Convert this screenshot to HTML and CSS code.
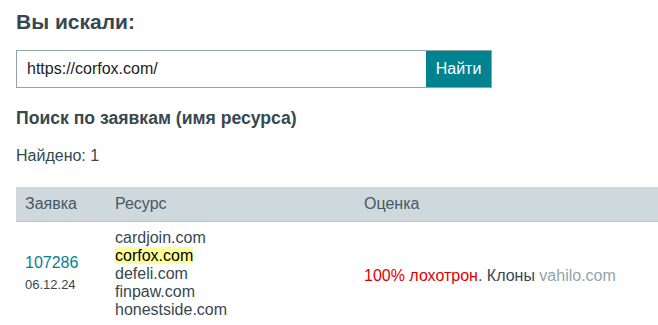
FILE: index.html
```html
<!DOCTYPE html>
<html lang="ru">
<head>
<meta charset="utf-8">
<link rel="stylesheet" href="styles.css">
</head>
<body>
<div class="page">
  <h1 class="title">Вы искали:</h1>
  <form class="search">
    <input class="search-input" type="text" value="https://corfox.com/">
    <button class="search-btn" type="button">Найти</button>
  </form>
  <h2 class="subtitle">Поиск по заявкам (имя ресурса)</h2>
  <p class="found">Найдено: 1</p>
  <table class="results">
    <thead>
      <tr><th class="c1">Заявка</th><th class="c2">Ресурс</th><th class="c3">Оценка</th></tr>
    </thead>
    <tbody>
      <tr>
        <td class="c1"><a class="req" href="#">107286</a><div class="date">06.12.24</div></td>
        <td class="c2 res">cardjoin.com<br><span class="hl">corfox.com</span><br>defeli.com<br>finpaw.com<br>honestside.com</td>
        <td class="c3 score"><span class="bad">100% лохотрон</span>. Клоны <span class="clone">vahilo.com</span></td>
      </tr>
    </tbody>
  </table>
</div>
</body>
</html>
```
FILE: styles.css
```css
html, body { margin: 0; padding: 0; background: #fff; }
body { font-family: "Liberation Sans", Arial, sans-serif; color: #37474f; font-size: 16px; overflow: hidden; }
.page { padding: 9px 0 0 16px; width: 660px; }
.title { margin: 0; font-size: 21px; font-weight: bold; line-height: 26px; color: #37474f; }
.search { display: flex; margin: 15px 0 0 0; height: 38px; width: 476px; }
.search-input { box-sizing: border-box; flex: 1; height: 38px; border: 1px solid #90a4ae; border-right: none; padding: 0 10px; font: 16px "Liberation Sans", Arial, sans-serif; color: #222; outline: none; }
.search-btn { box-sizing: border-box; width: 66px; height: 38px; border: 1px solid #90a4ae; border-left: none; background: #00838f; color: #fff; font: 16px "Liberation Sans", Arial, sans-serif; padding: 0; }
.subtitle { margin: 19px 0 0 0; font-size: 17.6px; font-weight: bold; line-height: 22px; color: #37474f; }
.found { margin: 17px 0 0 0; line-height: 20px; color: #37474f; }
.results { margin-top: 21px; border-collapse: collapse; width: 646px; }
.results th { background: #cfd8dc; font-weight: normal; text-align: left; height: 34px; padding: 0 0 0 9px; border-bottom: 1px solid #b9c4c9; color: #455a64; }
.results td { padding: 7px 0 0 9px; vertical-align: middle; }
.results .c1 { width: 81px; }
.results .c2 { width: 240px; }
.results .score { padding-top: 11px; }
.req { color: #00838f; text-decoration: none; display: block; line-height: 20px; }
.date { font-size: 13px; line-height: 20px; color: #37474f; margin-top: 2px; }
.res { line-height: 18px; color: #37474f; }
.hl { background: #ffff99; color: #000; }
.bad { color: #e00000; }
.clone { color: #90a4ae; }
```
